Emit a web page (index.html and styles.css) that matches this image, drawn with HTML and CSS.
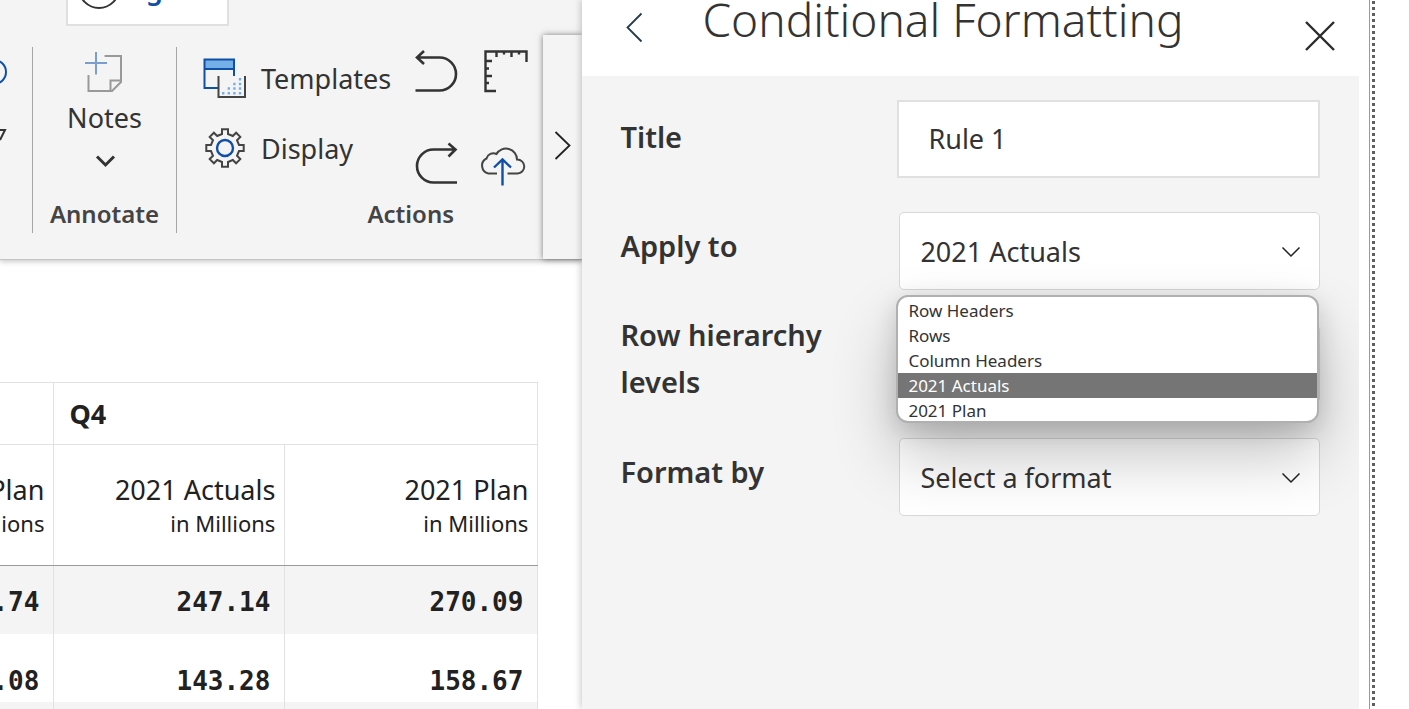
FILE: index.html
```html
<!DOCTYPE html>
<html lang="en">
<head>
<meta charset="utf-8">
<title>Conditional Formatting</title>
<link rel="stylesheet" href="styles.css">
</head>
<body>
<main class="workspace">
  <section class="report">
    <div class="ribbon">
      <div class="ribbon-body">
        <div class="ribbon-top">
          <button class="tab-button" type="button">
            <svg width="42" height="42" viewBox="-21 -21 42 42" aria-hidden="true"><circle r="20" fill="none" stroke="#333" stroke-width="2"/></svg>
            <span>g</span>
          </button>
        </div>
        <div class="ribbon-groups">
          <div class="group group-edge">
            <svg width="32" height="110" viewBox="0 47 32 110" aria-hidden="true" fill="none" stroke-width="2">
              <circle cx="-6" cy="72" r="12" stroke="#0f4fa8"/>
              <path d="M0 130H5L0 140" stroke="#333"/>
            </svg>
          </div>
          <div class="group group-annotate">
            <button class="notes-button" type="button">
              <svg width="42" height="50" viewBox="84 47 42 50" aria-hidden="true" fill="none" stroke-width="2">
                <path d="M104.500 56H121V82L112 91H88.500V75M121 80.500H110.500V91" stroke="#999"/>
                <path d="M96 52V74.500M85 63H107" stroke="#7a9fce"/>
              </svg>
              <span class="notes-text">Notes</span>
              <svg width="24" height="24" viewBox="92 149 24 24" aria-hidden="true" fill="none" stroke="#333" stroke-width="3"><path d="M96 156.500L104.500 165L113 156.500"/></svg>
            </button>
            <div class="group-name">Annotate</div>
          </div>
          <div class="group group-actions">
            <div class="commands">
              <div class="text-commands">
                <button class="command" type="button">
                  <svg width="44" height="44" viewBox="203 56 44 44" aria-hidden="true" fill="none" stroke-width="2">
                    <path d="M204.500 59.500H234V69H204.500Z" fill="#75afe7"/>
                    <path d="M218 88H204.500V59.500H234V76M204.500 69H234" stroke="#0f4fa8"/>
                    <path d="M218.500 76V97H245V76" stroke="#444"/>
                    <path d="M222 93.300H241.500" stroke="#75afe7" stroke-width="2.400" stroke-dasharray="2.400 3.200"/>
                    <path d="M227.600 88.500H241.500M233.200 84H241.500M238.800 79.300H241.500" stroke="#75afe7" stroke-width="2.400" stroke-dasharray="2.400 3.200"/>
                  </svg>
                  <span>Templates</span>
                </button>
                <button class="command" type="button">
                  <svg width="44" height="44" viewBox="-22 -22 44 44" aria-hidden="true" fill="none" stroke-width="2">
                    <path d="M-3-14L-3-18.700L3-18.700L3-14L7.800-12L11.100-15.300L15.300-11.100L12-7.800L14-3L18.700-3L18.700 3L14 3L12 7.800L15.300 11.100L11.100 15.300L7.800 12L3 14L3 18.700L-3 18.700L-3 14L-7.800 12L-11.100 15.300L-15.300 11.100L-12 7.800L-14 3L-18.700 3L-18.700-3L-14-3L-12-7.800L-15.300-11.100L-11.100-15.300L-7.800-12Z" stroke="#444"/>
                    <circle r="8" stroke="#0f4fa8" stroke-width="2.400"/>
                  </svg>
                  <span>Display</span>
                </button>
              </div>
              <div class="icon-commands">
                <button class="icon-button" type="button" aria-label="Undo">
                  <svg width="48" height="48" viewBox="412 47 48 48" fill="none" stroke="#333" stroke-width="2.600"><path d="M415.500 90.500H439.500A16.500 16.500 0 0 0 439.500 57.500H417M424 51L417 57.500L424 64"/></svg>
                </button>
                <button class="icon-button" type="button" aria-label="Ruler">
                  <svg width="48" height="48" viewBox="480 47 48 48" fill="none" stroke="#333" stroke-width="2.400"><path d="M496 91H485.500V51.500H526.500V62M496.500 51V57M504 51V54.500M511.500 51V57M519 51V54.500M485 61H492M485 68.500H489M485 76H492M485 83H489"/></svg>
                </button>
                <button class="icon-button" type="button" aria-label="Redo">
                  <svg width="48" height="48" viewBox="412 141 48 48" fill="none" stroke="#333" stroke-width="2.600"><path d="M457 182.500H433.500A16.500 16.500 0 0 1 433.500 149.500H455M448.500 143.500L455.500 149.500L448.500 156.500"/></svg>
                </button>
                <button class="icon-button" type="button" aria-label="Upload">
                  <svg width="48" height="48" viewBox="480 141 48 48" fill="none" stroke="#444" stroke-width="2"><path d="M497 173.500H488.500A8 8 0 0 1 486.500 158.500A7 7 0 0 1 496.500 154A11 11 0 0 1 517 159.500A7 7 0 0 1 517.500 173.500H507.500"/><path d="M502.500 185.500V159.500M494 167.500L502.500 159.500L511 167.500" stroke="#0f4fa8" stroke-width="2.400"/></svg>
                </button>
              </div>
            </div>
            <div class="group-name">Actions</div>
          </div>
        </div>
      </div>
      <button class="ribbon-more" type="button" aria-label="More commands">
        <svg width="20" height="32" viewBox="553 130 20 32" fill="none" stroke="#222" stroke-width="1.800"><path d="M555.500 132L569.500 145.500L555.500 159"/></svg>
      </button>
    </div>
    <div class="table-view">
      <table class="matrix">
        <colgroup><col><col><col class="col-last"></colgroup>
        <thead>
          <tr class="quarter-row"><th></th><th colspan="2">Q4</th></tr>
          <tr class="measure-row">
            <th>Plan<small>Millions</small></th>
            <th>2021 Actuals<small>in Millions</small></th>
            <th>2021 Plan<small>in Millions</small></th>
          </tr>
        </thead>
        <tbody>
          <tr class="shaded"><td>.74</td><td>247.14</td><td>270.09</td></tr>
          <tr class="lower"><td>.08</td><td>143.28</td><td>158.67</td></tr>
          <tr class="shaded"><td></td><td></td><td></td></tr>
        </tbody>
      </table>
    </div>
  </section>

  <section class="panel">
    <header class="panel-header">
      <button class="panel-back" type="button" aria-label="Back">
        <svg width="20" height="32" viewBox="625 11 20 32" fill="none" stroke="#253a4a" stroke-width="1.800"><path d="M641.500 13.500L627.500 27.500L641.500 41.500"/></svg>
      </button>
      <h1 class="panel-title">Conditional Formatting</h1>
      <button class="panel-close" type="button" aria-label="Close">
        <svg width="32" height="32" viewBox="0 0 32 32" fill="none" stroke="#2b2b2b" stroke-width="2.400"><path d="M2 2L30 30M30 2L2 30"/></svg>
      </button>
    </header>
    <form class="rule-form">
      <div class="row row-title">
        <label class="row-label" for="title">Title</label>
        <div class="field"><input id="title" type="text" value="Rule 1"></div>
      </div>
      <div class="row">
        <label class="row-label" for="apply">Apply to</label>
        <div class="field">
          <select id="apply"><option>2021 Actuals</option></select>
          <svg class="caret" width="20" height="12" viewBox="0 0 20 12" fill="none" stroke="#222" stroke-width="1.500" aria-hidden="true"><path d="M1.500 1.500L10 10L18.500 1.500"/></svg>
          <ul class="menu" role="listbox" aria-label="Apply to">
            <li role="option">Row Headers</li>
            <li role="option">Rows</li>
            <li role="option">Column Headers</li>
            <li role="option" class="selected" aria-selected="true">2021 Actuals</li>
            <li role="option">2021 Plan</li>
          </ul>
        </div>
      </div>
      <div class="row">
        <label class="row-label" for="levels">Row hierarchy levels</label>
        <div class="field"><select id="levels"></select></div>
      </div>
      <div class="row">
        <label class="row-label" for="format">Format by</label>
        <div class="field">
          <select id="format"><option>Select a format</option></select>
          <svg class="caret" width="20" height="12" viewBox="0 0 20 12" fill="none" stroke="#222" stroke-width="1.500" aria-hidden="true"><path d="M1.500 1.500L10 10L18.500 1.500"/></svg>
        </div>
      </div>
    </form>
  </section>
  <div class="divider"></div>
</main>
</body>
</html>
```
FILE: styles.css
```css
* { box-sizing: border-box; }

body {
  margin: 0;
  background: #fff;
  color: #333;
  font-family: "Noto Sans", "Open Sans", sans-serif;
  font-size: 27px;
}

button, input, select { font: inherit; color: inherit; }

button {
  padding: 0;
  border: 0;
  background: none;
}

svg { display: block; flex: none; overflow: visible; }

.workspace {
  display: flex;
  height: 100vh;
  overflow: hidden;
}

/* Report side */
.report {
  display: flex;
  flex-direction: column;
  flex: 3 1 0;
  min-width: 0;
  overflow: hidden;
}

.ribbon {
  display: flex;
  height: 260px;
  flex: none;
  background: #f4f4f4;
  border-bottom: 1px solid #c4c4c4;
  box-shadow: 0 2px 5px rgba(0, 0, 0, 0.2);
}

.ribbon-body { flex: 1; min-width: 0; }

.ribbon-top {
  display: flex;
  align-items: flex-end;
  height: 47px;
  padding: 0 0 21px 66px;
  overflow: hidden;
}

.tab-button {
  display: flex;
  align-items: center;
  gap: 26px;
  flex: none;
  width: 163px;
  height: 76px;
  padding-left: 10px;
  border: 2px solid #e0e0e0;
  background: #fff;
  color: #0f4fa8;
  font-weight: 600;
}

.ribbon-groups { display: flex; height: 186px; }

.group {
  display: flex;
  flex-direction: column;
  justify-content: space-between;
}

.group-edge { width: 32px; overflow: hidden; }

.group-annotate {
  width: 145px;
  border: 1px solid #a6a6a6;
  border-width: 0 1px;
}

.group-actions { flex: 1; padding: 0 15px 0 26px; }

.group-name {
  color: #444;
  font-size: 24px;
  font-weight: 600;
  line-height: 38px;
  text-align: center;
}

.group-actions .group-name { padding-left: 90px; }

.notes-button {
  display: flex;
  flex-direction: column;
  align-items: center;
}

.notes-text { margin: 3px 0 13px; line-height: 36px; }

.commands { display: flex; justify-content: space-between; }

.text-commands {
  display: flex;
  flex-direction: column;
  gap: 8px;
}

.command {
  display: flex;
  align-items: center;
  gap: 14px;
  height: 62px;
}

.icon-commands {
  display: grid;
  grid-template-columns: 48px 48px;
  gap: 46px 20px;
  align-content: start;
}

.ribbon-more {
  display: flex;
  align-items: center;
  justify-content: center;
  width: 39px;
  margin-top: 35px;
  padding-bottom: 2px;
  background: #f4f4f4;
  box-shadow: 0 0 6px rgba(0, 0, 0, 0.5);
}

/* Matrix */
.table-view {
  display: flex;
  justify-content: flex-end;
  flex: 1;
  min-height: 0;
  padding: 122px 44px 0 0;
  overflow: hidden;
}

.matrix {
  flex: none;
  width: 716px;
  height: 348px;
  table-layout: fixed;
  border-collapse: collapse;
  color: #212121;
}

.col-last { width: 253px; }

.matrix th, .matrix td {
  padding: 0 9px 0 0;
  border: 1px solid #e2e2e2;
  text-align: right;
}

.quarter-row { height: 62px; }

.quarter-row th[colspan] { padding-left: 15px; text-align: left; }

.measure-row { height: 121px; }

.matrix .measure-row th {
  padding-top: 2px;
  border-bottom-color: #9a9a9a;
  font-weight: 400;
  line-height: 34px;
}

.measure-row small { display: block; font-size: 22px; line-height: 32px; }

.matrix td {
  height: 68px;
  padding: 4px 14px 0 0;
  border-width: 0 1px;
  font-family: "DejaVu Sans Mono", monospace;
  font-size: 26px;
  font-weight: 700;
}

.matrix .lower td { padding-top: 26px; }

.shaded { background: #f4f4f4; }

/* Formatting panel */
.panel {
  flex: 4 1 0;
  min-width: 0;
  background: #f4f4f4;
  box-shadow: -1px 0 7px rgba(0, 0, 0, 0.22);
  clip-path: inset(0 0 0 -12px);
}

.panel-header {
  display: flex;
  align-items: flex-start;
  height: 76px;
  padding: 0 23px 0 43px;
  background: #fff;
}

.panel-back { margin-top: 11px; }

.panel-title {
  flex: 1;
  margin: 0 0 0 57px;
  font-size: 46px;
  font-weight: 300;
  line-height: 38px;
  white-space: nowrap;
}

.panel-close { margin-top: 20px; }

.rule-form {
  display: grid;
  gap: 7px;
  padding: 10px 39px 0 38px;
}

.row {
  display: grid;
  grid-template-columns: 279px minmax(0, 1fr);
  align-items: center;
  min-height: 106px;
}

.row-title {
  grid-template-columns: 277px minmax(0, 1fr);
  min-height: 105px;
}

.row-label {
  width: 240px;
  padding-bottom: 12px;
  font-size: 29px;
  font-weight: 600;
  line-height: 47px;
}

.row-title .row-label { padding-bottom: 4px; }

.field { position: relative; }

.field input, .field select {
  display: block;
  width: 100%;
  height: 78px;
  margin: 0;
  padding: 0 20px;
  border: 1px solid #d8d8d8;
  border-radius: 5px;
  outline: 0;
  background: #fff;
  appearance: none;
}

.field input {
  padding: 0 29px;
  border: 2px solid #e0e0e0;
  border-radius: 0;
}

.caret {
  position: absolute;
  top: 34px;
  right: 19px;
  pointer-events: none;
}

.menu {
  position: absolute;
  z-index: 2;
  top: 83px;
  right: 1px;
  left: -3px;
  height: 128px;
  margin: 0;
  padding: 1px 0 0;
  border: 2px solid #b0b0b0;
  border-radius: 12px;
  overflow: hidden;
  list-style: none;
  background: #fff;
  font-size: 17px;
  line-height: 25px;
  box-shadow: 0 32px 64px rgba(0, 0, 0, 0.24), 0 6px 24px rgba(0, 0, 0, 0.14);
}

.menu li { padding-left: 10px; }

.menu .selected { background: #757575; color: #fff; }

.divider {
  flex: none;
  width: 40px;
  margin-left: 10px;
  border-left: 1px solid #999;
  background: repeating-linear-gradient(#fff 0 1px, #5f5f5f 1px 4px, #fff 4px 6px) 2px 0 / 3px 100% no-repeat;
}

/* Later rows sit beneath the open list and its shadow */
.row:nth-child(n+3) .field { z-index: 0; }
```
